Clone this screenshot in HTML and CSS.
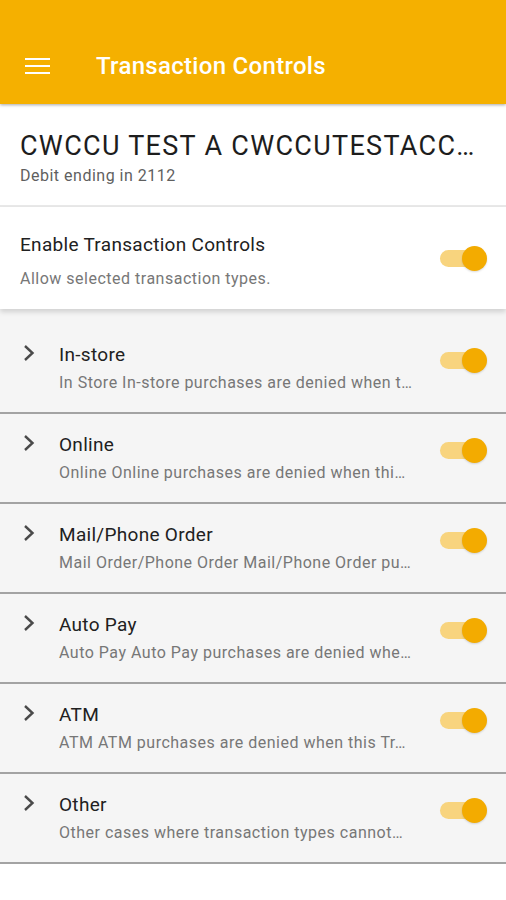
FILE: index.html
```html
<!DOCTYPE html>
<html lang="en">
<head>
    <meta charset="UTF-8">
    <meta name="viewport" content="width=device-width, initial-scale=1.0">
    <title>Transaction Controls</title>
    <link rel="stylesheet" href="styles.css">
</head>
<body>

<header class="app-bar">
    <div class="menu-icon">
        <span></span><span></span><span></span>
    </div>
    <h1>Transaction Controls</h1>
</header>

<section class="card-info">
    <h2>CWCCU TEST A CWCCUTESTACC…</h2>
    <p>Debit ending in 2112</p>
</section>

<section class="enable-row">
    <div class="row-text">
        <div class="row-title">Enable Transaction Controls</div>
        <div class="row-desc">Allow selected transaction types.</div>
    </div>
    <div class="toggle on"><span class="thumb"></span></div>
</section>

<main class="control-list">
    <div class="control-row">
        <svg class="chevron" viewBox="0 0 14 18"><polyline points="3,2 10.5,9 3,16"/></svg>
        <div class="row-text">
            <div class="row-title">In-store</div>
            <div class="row-desc">In Store In-store purchases are denied when t…</div>
        </div>
        <div class="toggle on"><span class="thumb"></span></div>
    </div>
    <div class="control-row">
        <svg class="chevron" viewBox="0 0 14 18"><polyline points="3,2 10.5,9 3,16"/></svg>
        <div class="row-text">
            <div class="row-title">Online</div>
            <div class="row-desc">Online Online purchases are denied when thi…</div>
        </div>
        <div class="toggle on"><span class="thumb"></span></div>
    </div>
    <div class="control-row">
        <svg class="chevron" viewBox="0 0 14 18"><polyline points="3,2 10.5,9 3,16"/></svg>
        <div class="row-text">
            <div class="row-title">Mail/Phone Order</div>
            <div class="row-desc">Mail Order/Phone Order Mail/Phone Order pu…</div>
        </div>
        <div class="toggle on"><span class="thumb"></span></div>
    </div>
    <div class="control-row">
        <svg class="chevron" viewBox="0 0 14 18"><polyline points="3,2 10.5,9 3,16"/></svg>
        <div class="row-text">
            <div class="row-title">Auto Pay</div>
            <div class="row-desc">Auto Pay Auto Pay purchases are denied whe…</div>
        </div>
        <div class="toggle on"><span class="thumb"></span></div>
    </div>
    <div class="control-row">
        <svg class="chevron" viewBox="0 0 14 18"><polyline points="3,2 10.5,9 3,16"/></svg>
        <div class="row-text">
            <div class="row-title">ATM</div>
            <div class="row-desc">ATM ATM purchases are denied when this Tr…</div>
        </div>
        <div class="toggle on"><span class="thumb"></span></div>
    </div>
    <div class="control-row">
        <svg class="chevron" viewBox="0 0 14 18"><polyline points="3,2 10.5,9 3,16"/></svg>
        <div class="row-text">
            <div class="row-title">Other</div>
            <div class="row-desc">Other cases where transaction types cannot…</div>
        </div>
        <div class="toggle on"><span class="thumb"></span></div>
    </div>
</main>

</body>
</html>
```

FILE: styles.css
```css
body {
    font-family: Roboto, "Noto Sans", Arial, sans-serif;
    margin: 0;
    padding: 0;
    background-color: #fff;
    width: 506px;
    height: 900px;
    overflow: hidden;
}

.app-bar {
    height: 104px;
    background-color: #f5b000;
    display: flex;
    align-items: center;
    padding: 28px 0 0 25px;
    box-sizing: border-box;
    box-shadow: 0 1px 3px rgba(0, 0, 0, 0.35);
    position: relative;
    z-index: 2;
}

.menu-icon {
    width: 25px;
    display: flex;
    flex-direction: column;
    gap: 4.5px;
}

.menu-icon span {
    display: block;
    height: 2.5px;
    background-color: #fff;
}

.app-bar h1 {
    margin: 0 0 0 46px;
    font-size: 24px;
    font-weight: 500;
    letter-spacing: 0.3px;
    color: #fff;
}

.card-info {
    padding: 26px 20px 0;
    height: 103px;
    box-sizing: border-box;
    border-bottom: 2px solid #e9e9e9;
}

.card-info h2 {
    margin: 0;
    font-size: 27px;
    font-weight: 400;
    letter-spacing: 1.3px;
    color: #1d1d1d;
    white-space: nowrap;
    line-height: 32px;
}

.card-info p {
    margin: 5px 0 0;
    font-size: 16px;
    letter-spacing: 0.5px;
    line-height: 18px;
    color: #5f5f5f;
}

.enable-row {
    height: 102px;
    display: flex;
    align-items: center;
    padding: 0 19px 0 20px;
    box-sizing: border-box;
    box-shadow: 0 3px 5px rgba(0, 0, 0, 0.15);
    position: relative;
    z-index: 1;
    background-color: #fff;
}

.enable-row .row-text {
    align-self: flex-start;
    padding-top: 27px;
}

.row-text {
    flex: 1;
    min-width: 0;
}

.row-title {
    font-size: 19px;
    letter-spacing: 0.3px;
    color: #212121;
    line-height: 22px;
}

.row-desc {
    margin-top: 8px;
    font-size: 16px;
    letter-spacing: 0.5px;
    color: #777;
    line-height: 18px;
    white-space: nowrap;
}

.enable-row .row-desc {
    margin-top: 14px;
}

.toggle {
    position: relative;
    width: 43px;
    height: 17px;
    border-radius: 9px;
    background-color: #f8d47e;
    margin: 0 4px 0 22px;
    flex-shrink: 0;
}

.toggle .thumb {
    position: absolute;
    top: -4px;
    right: -4px;
    width: 25px;
    height: 25px;
    border-radius: 50%;
    background-color: #f3ab00;
    box-shadow: 0 1px 2px rgba(0, 0, 0, 0.15);
}

.control-list {
    background-color: #f5f5f5;
    padding-top: 15px;
}

.control-row {
    height: 90px;
    display: flex;
    align-items: flex-start;
    padding: 20px 19px 0 22px;
    box-sizing: border-box;
    border-bottom: 2px solid #a3a3a3;
}

.chevron {
    width: 14px;
    height: 18px;
    fill: none;
    stroke: #4a4a4a;
    stroke-width: 2.4;
    margin: 0 23px 0 0;
    flex-shrink: 0;
}

.control-row .toggle {
    margin-top: 8px;
}
```
